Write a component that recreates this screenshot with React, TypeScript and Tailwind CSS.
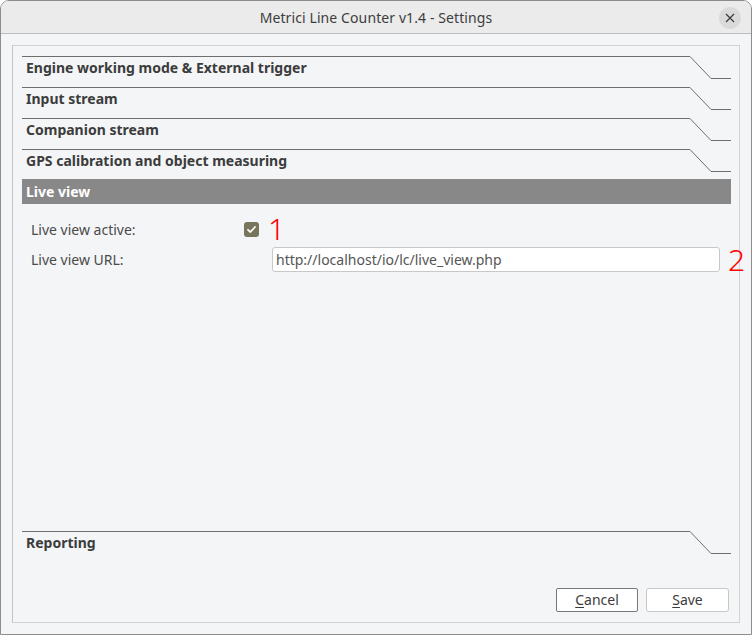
import React from "react";

const FONT = { fontFamily: '"Noto Sans", "DejaVu Sans", sans-serif' };

function SectionHeader({ title, h = 31 }: { title: string; h?: number }) {
  return (
    <div className="flex w-full shrink-0" style={{ height: h }}>
      <div className="flex-1 min-w-0 border-t border-[#6e6e6e] pl-[4px] pt-[2px] text-[14px] leading-[18px] font-bold text-[#3c3c3c]">
        {title}
      </div>
      <svg width="41" height="31" className="shrink-0" viewBox="0 0 41 31">
        <path d="M0 0.5 L21 22.5 L41 22.5" fill="none" stroke="#6e6e6e" strokeWidth="1" />
      </svg>
    </div>
  );
}

export default function App() {
  return (
    <div className="w-[752px] h-[635px] bg-white" style={FONT}>
      <div className="w-[752px] h-[635px] flex flex-col bg-[#f4f5f7] border border-[#8c8c8c] rounded-t-[9px] overflow-hidden">
        {/* title bar */}
        <div className="relative h-[33px] shrink-0 bg-[#ebebeb] border-b border-[#bcbcbc] flex items-center justify-center">
          <span className="text-[14px] text-[#3d3d3d] tracking-[0.1px]">Metrici Line Counter v1.4 - Settings</span>
          <div className="absolute right-[10px] top-[6px] w-[22px] h-[22px] rounded-full bg-[#dadada] flex items-center justify-center">
            <svg width="10" height="10" viewBox="0 0 10 10">
              <path d="M1 1 L9 9 M9 1 L1 9" stroke="#3a3a3a" strokeWidth="1.2" />
            </svg>
          </div>
        </div>
        {/* body */}
        <div className="flex-1 p-[11px] flex min-h-0">
          <div className="flex-1 min-w-0 border border-[#d2d3d5] border-l-[#c4c4c4] pt-[10px] pl-[9px] pr-[8px] pb-[10px] flex flex-col">
            <SectionHeader title="Engine working mode & External trigger" />
            <SectionHeader title="Input stream" />
            <SectionHeader title="Companion stream" />
            <SectionHeader title="GPS calibration and object measuring" h={30} />
            <div className="h-[25px] bg-[#888888] flex items-center pl-[4px] text-[14px] font-bold text-white shrink-0">
              Live view
            </div>
            <div className="flex-1 min-h-0 flex flex-col pt-[13px] pl-[9px]">
              <div className="flex items-center h-[24px]">
                <span className="w-[213px] shrink-0 text-[14px] text-[#4a4a4a]">Live view active:</span>
                <div className="w-[15px] h-[15px] shrink-0 rounded-[3px] bg-[#77765c] flex items-center justify-center">
                  <svg width="11" height="11" viewBox="0 0 11 11">
                    <path d="M2 5.8 L4.4 8 L9 3" fill="none" stroke="#ffffff" strokeWidth="1.8" strokeLinecap="round" strokeLinejoin="round" />
                  </svg>
                </div>
                <span className="ml-[9px] shrink-0 text-[30px] leading-[24px] text-[#ff0000] font-light">1</span>
              </div>
              <div className="flex items-center h-[25px] mt-[6px]">
                <span className="w-[241px] shrink-0 text-[14px] text-[#4a4a4a]">Live view URL:</span>
                <div className="w-[448px] shrink-0 h-[25px] bg-white border border-[#c8c8c8] rounded-[3px] flex items-center pl-[3px] text-[14px] text-[#555555]">
                  http://localhost/io/lc/live_view.php
                </div>
                <span className="ml-[8px] shrink-0 text-[30px] leading-[24px] text-[#ff0000] font-light">2</span>
              </div>
            </div>
            <SectionHeader title="Reporting" />
            <div className="flex justify-end gap-[8px] pr-[2px] mt-[26px] shrink-0">
              <button className="w-[82px] h-[24px] bg-white border border-[#777777] rounded-[2px] text-[14px] text-[#3c3c3c] leading-[20px]">
                <span className="underline underline-offset-2">C</span>ancel
              </button>
              <button className="w-[83px] h-[24px] bg-white border border-[#c8c8c8] rounded-[3px] text-[14px] text-[#3c3c3c] leading-[20px]">
                <span className="underline underline-offset-2">S</span>ave
              </button>
            </div>
          </div>
        </div>
      </div>
    </div>
  );
}
